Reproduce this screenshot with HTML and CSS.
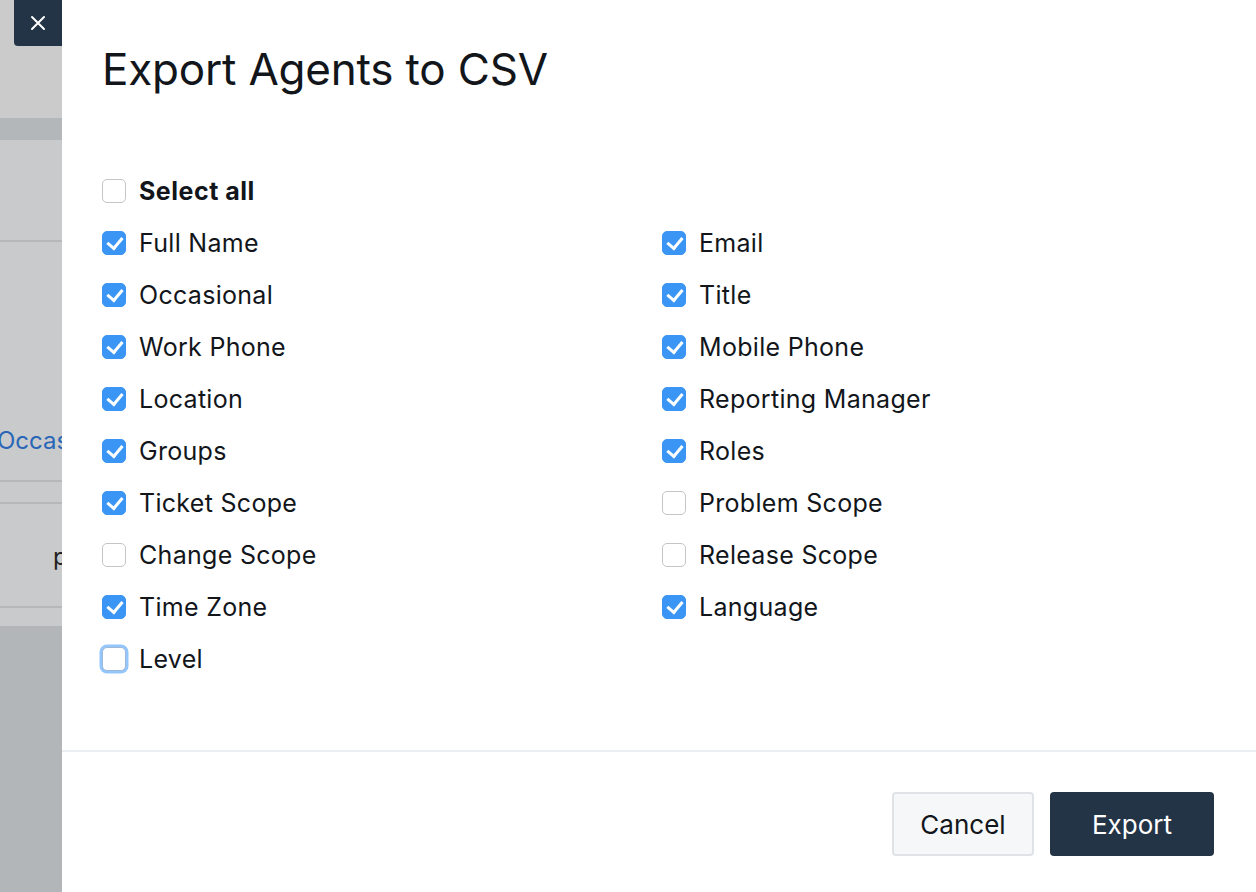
FILE: index.html
```html
<!DOCTYPE html>
<html>
<head>
<meta charset="utf-8">
<link rel="stylesheet" href="styles.css">
</head>
<body>
<div class="page">
  <div class="backdrop">
    <div class="bg-head"></div>
    <div class="bg-band"></div>
    <div class="bg-row bg-r1"></div>
    <div class="bg-row bg-r2"><span class="bg-link">Occasional</span></div>
    <div class="bg-row bg-r3"></div>
    <div class="bg-row bg-r4"><span class="bg-text">p</span></div>
    <div class="bg-row bg-r5"></div>
    <div class="bg-rest"></div>
    <button class="close" aria-label="Close">
      <svg width="16" height="16" viewBox="0 0 16 16"><path d="M2 2 L14 14 M14 2 L2 14" stroke="#fff" stroke-width="2" stroke-linecap="round"/></svg>
    </button>
  </div>
  <div class="modal">
    <h1 class="title">Export Agents to CSV</h1>
    <div class="body">
      <label class="opt all"><span class="cb"></span><span class="lbl">Select all</span></label>
      <div class="grid">
        <label class="opt"><span class="cb on"></span><span class="lbl">Full Name</span></label>
        <label class="opt"><span class="cb on"></span><span class="lbl">Email</span></label>
        <label class="opt"><span class="cb on"></span><span class="lbl">Occasional</span></label>
        <label class="opt"><span class="cb on"></span><span class="lbl">Title</span></label>
        <label class="opt"><span class="cb on"></span><span class="lbl">Work Phone</span></label>
        <label class="opt"><span class="cb on"></span><span class="lbl">Mobile Phone</span></label>
        <label class="opt"><span class="cb on"></span><span class="lbl">Location</span></label>
        <label class="opt"><span class="cb on"></span><span class="lbl">Reporting Manager</span></label>
        <label class="opt"><span class="cb on"></span><span class="lbl">Groups</span></label>
        <label class="opt"><span class="cb on"></span><span class="lbl">Roles</span></label>
        <label class="opt"><span class="cb on"></span><span class="lbl">Ticket Scope</span></label>
        <label class="opt"><span class="cb"></span><span class="lbl">Problem Scope</span></label>
        <label class="opt"><span class="cb"></span><span class="lbl">Change Scope</span></label>
        <label class="opt"><span class="cb"></span><span class="lbl">Release Scope</span></label>
        <label class="opt"><span class="cb on"></span><span class="lbl">Time Zone</span></label>
        <label class="opt"><span class="cb on"></span><span class="lbl">Language</span></label>
        <label class="opt"><span class="cb focus"></span><span class="lbl">Level</span></label>
      </div>
    </div>
    <div class="footer">
      <button class="btn cancel">Cancel</button>
      <button class="btn export">Export</button>
    </div>
  </div>
</div>
</body>
</html>
```
FILE: styles.css
```css
* { box-sizing: border-box; }
html, body { margin: 0; padding: 0; }
body {
  width: 1256px;
  height: 892px;
  overflow: hidden;
  font-family: Inter, "Noto Sans", sans-serif;
  color: #12161b;
}
.page {
  display: flex;
  height: 892px;
}
.backdrop {
  position: relative;
  width: 62px;
  flex: none;
  display: flex;
  flex-direction: column;
  background: #c9cacb;
}
.bg-head { height: 118px; background: #cbcbcc; }
.bg-band { height: 22px; background: #b3b7ba; }
.bg-row { background: #c9cacb; border-bottom: 2px solid #b6b8ba; position: relative; overflow: hidden; }
.bg-r1 { height: 102px; }
.bg-r2 { height: 240px; }
.bg-r3 { height: 22px; }
.bg-r4 { height: 104px; }
.bg-r5 { height: 18px; border-bottom: none; }
.bg-rest { flex: 1; background: #b2b6b9; }
.bg-link {
  position: absolute;
  top: 184px;
  left: -3px;
  font-size: 24px;
  color: #2a66b8;
  white-space: nowrap;
}
.bg-text {
  position: absolute;
  left: 53px;
  top: 38px;
  font-size: 24px;
  color: #222;
}
.close {
  position: absolute;
  left: 14px;
  top: 0;
  width: 48px;
  height: 46px;
  border: none;
  padding: 0;
  background: #243447;
  border-radius: 0 0 0 4px;
  display: flex;
  align-items: center;
  justify-content: center;
  z-index: 2;
}
.modal {
  flex: 1;
  background: #fff;
  display: flex;
  flex-direction: column;
}
.title {
  margin: 0 0 0 -62px;
  padding: 42px 0 0 102px;
  font-weight: 400;
  font-size: 44px;
  line-height: 54px;
  letter-spacing: -0.2px;
  color: #12161b;
}
.body {
  padding: 69px 0 0 40px;
  height: 656px;
  border-bottom: 2px solid #ebeff3;
}
.grid {
  display: grid;
  grid-template-columns: 560px 1fr;
}
.opt {
  display: flex;
  align-items: center;
  height: 52px;
  font-size: 25px;
  letter-spacing: 0.3px;
  color: #12161b;
}
.all .lbl { font-weight: 700; letter-spacing: 0.5px; }
.cb {
  width: 24px;
  height: 24px;
  border-radius: 5px;
  border: 1.5px solid #c3c6c9;
  background: #fff;
  margin-right: 13px;
  flex: none;
  position: relative;
}
.cb.on {
  background: #3a95f5;
  border-color: #3a95f5;
}
.cb.on::after {
  content: "";
  position: absolute;
  left: 7px;
  top: 2px;
  width: 7px;
  height: 12px;
  border: solid #fff;
  border-width: 0 3px 3px 0;
  transform: rotate(40deg);
}
.cb.focus {
  border: 1.5px solid #9cb9d9;
  box-shadow: 0 0 0 2.5px #94c6fb;
}
.lbl { line-height: 30px; }
.footer {
  display: flex;
  justify-content: flex-end;
  gap: 16px;
  padding: 40px 42px 0 0;
}
.btn {
  height: 64px;
  font-family: Inter, "Noto Sans", sans-serif;
  font-size: 26px;
  border-radius: 4px;
  padding: 0;
}
.cancel {
  width: 142px;
  background: #f5f7f9;
  border: 2px solid #dfe3e8;
  color: #12161b;
}
.export {
  width: 164px;
  background: #243447;
  border: none;
  color: #fff;
}
```
